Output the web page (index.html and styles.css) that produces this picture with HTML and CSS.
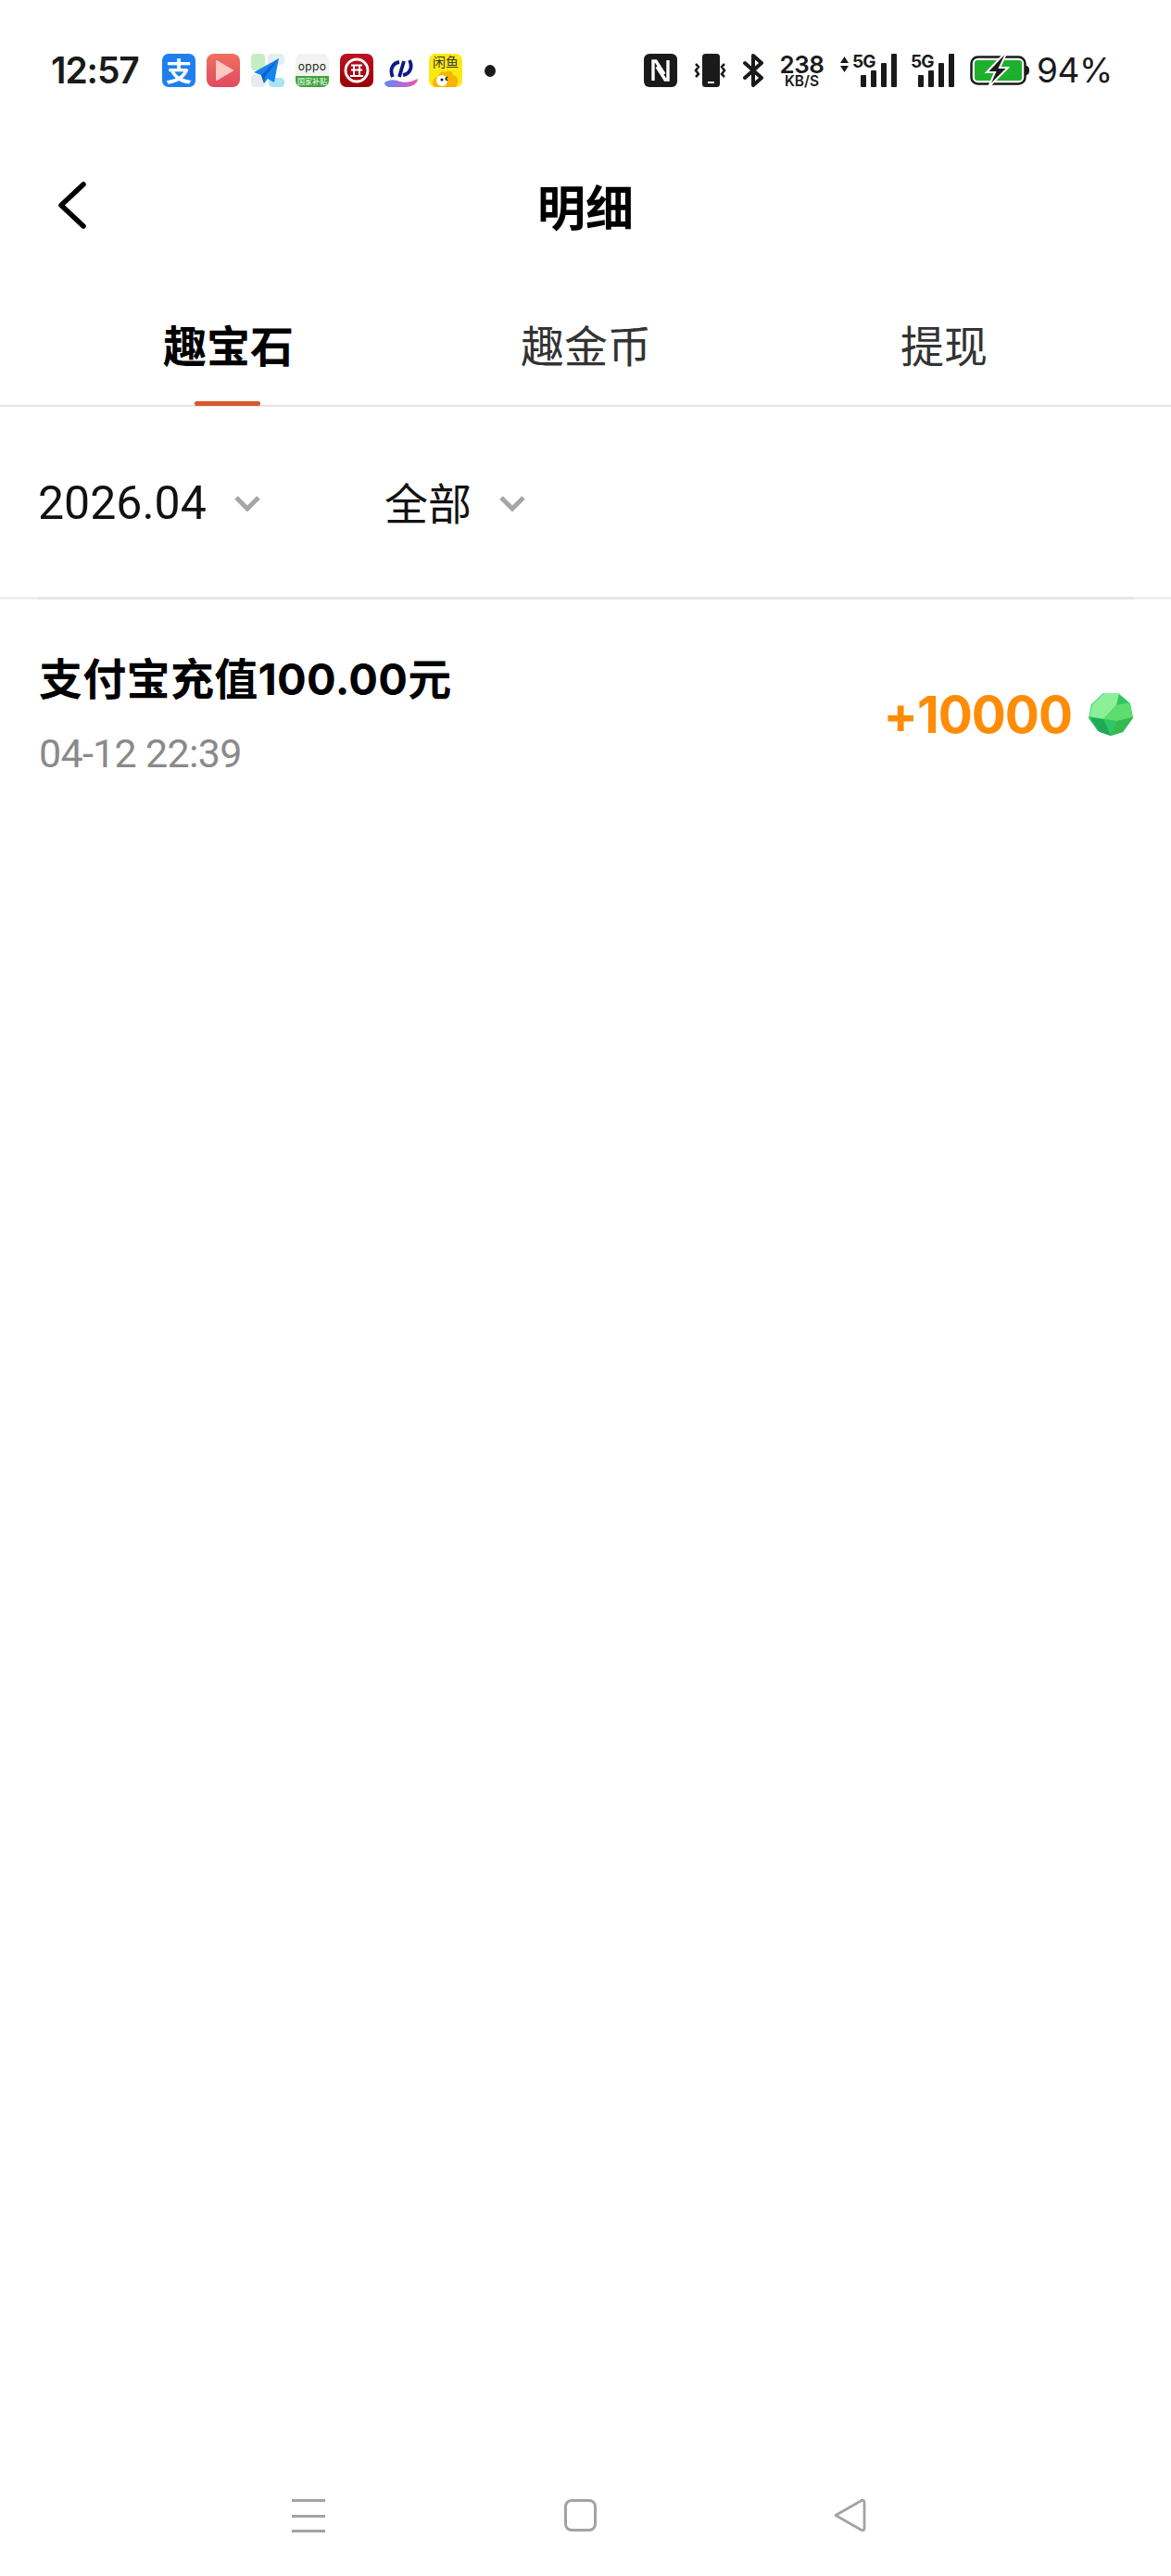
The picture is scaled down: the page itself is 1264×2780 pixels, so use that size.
FILE: index.html
```html
<!DOCTYPE html>
<html lang="zh">
<head>
<meta charset="utf-8">
<title>明细</title>
<link rel="stylesheet" href="styles.css">
</head>
<body>
<div class="page">
  <header class="status">
    <span class="time">12:57</span>
    <div class="apps">
      <div class="app alipay">支</div>
      <svg class="app" viewBox="0 0 36 36"><defs><linearGradient id="pl" x1="0" y1="0" x2="0" y2="1"><stop offset="0" stop-color="#f0705f"/><stop offset="1" stop-color="#e04a62"/></linearGradient></defs><rect width="36" height="36" rx="8" fill="url(#pl)"/><path d="M11 8l17 10-17 10z" fill="#fbc8c4" stroke="#fbc8c4" stroke-width="2" stroke-linejoin="round"/></svg>
      <svg class="app" viewBox="0 0 36 36"><rect x="0" y="0" width="15" height="18" rx="4" fill="#c5eec0"/><rect x="18" y="0" width="18" height="12" rx="4" fill="#e4eef2"/><rect x="0" y="22" width="15" height="14" rx="4" fill="#e4eef2"/><rect x="19" y="26" width="17" height="10" rx="4" fill="#a9e3f8"/><path d="M30 5L3 20l8 3 3 9 4-5 7 4z" fill="#1583ee"/><path d="M30 5L11 23l3 9 1-7z" fill="#0c62c4"/></svg>
      <div class="app oppo"><span class="oppo-name">oppo</span><span class="oppo-tag">国家补贴</span></div>
      <svg class="app" viewBox="0 0 36 36"><defs><linearGradient id="bk" x1="0" y1="0" x2="0" y2="1"><stop offset="0" stop-color="#bb1420"/><stop offset="1" stop-color="#980008"/></linearGradient></defs><rect width="36" height="36" rx="7" fill="url(#bk)"/><circle cx="18" cy="18" r="12" fill="none" stroke="#fff" stroke-width="2.800"/><path d="M12 12.500h12M11 24h14M15 12.500v5h6v-5M15 18v6M21 18v6M12 17.500h12" fill="none" stroke="#fff" stroke-width="2"/></svg>
      <svg class="app" viewBox="0 0 36 36"><defs><linearGradient id="wv" x1="0" y1="0" x2="1" y2="0"><stop offset="0" stop-color="#5a8df0"/><stop offset=".55" stop-color="#b06ad8"/><stop offset="1" stop-color="#f05aa0"/></linearGradient></defs><path d="M9 25C5 17 9 10 16 9M21 8l-5 17M27 7c4 8 0 15-7 16" fill="none" stroke="#0d1a80" stroke-width="3.800"/><path d="M0 31c6-4 11-3 17-1s12 0 19-3c0 5-6 9-14 9H6c-3 0-6-2-6-5z" fill="url(#wv)"/></svg>
      <div class="app duck"><span class="duck-name">闲鱼</span><svg class="duck-face" viewBox="0 0 36 20"><path d="M6 20c-5-6 1-12 4-11 1-5 4-7 8-5 4-3 8-1 8 3 6 1 7 8 3 13z" fill="#f7b500"/><circle cx="14" cy="13" r="6" fill="#fff"/><circle cx="14" cy="12" r="1.600" fill="#222"/><path d="M20 9l-2 2 2 2" fill="none" stroke="#222" stroke-width="1.500"/></svg></div>
    </div>
    <span class="dot"></span>
    <div class="sys">
      <svg class="ico-nfc" viewBox="0 0 36 36"><rect width="36" height="36" rx="6" fill="#1a1a1a"/><path d="M10 29V8h3l9 14M26 7v21h-3l-9-14" fill="none" stroke="#fff" stroke-width="3.400"/></svg>
      <svg class="ico-vib" viewBox="0 0 37 36"><rect x="10" width="19" height="36" rx="3.500" fill="#1a1a1a"/><rect x="16" y="30" width="7" height="2" fill="#fff"/><path d="M3 11l3 3-3 4 3 4-3 3M34 11l-3 3 3 4-3 4 3 3" fill="none" stroke="#1a1a1a" stroke-width="2.500"/></svg>
      <svg class="ico-bt" viewBox="0 0 23 36"><path d="M2 10l18 16-9 8V2l9 8L2 26" fill="none" stroke="#1a1a1a" stroke-width="4" stroke-linejoin="round" stroke-linecap="round"/></svg>
      <div class="speed"><span class="speed-num">238</span><span class="speed-unit">KB/S</span></div>
      <div class="signal">
        <svg class="updown" viewBox="0 0 9 17"><path d="M4.500 0L9 7H0zM4.500 17L0 10h9z" fill="#1a1a1a"/></svg>
        <span class="five">5G</span>
        <div class="bars"><i class="b1"></i><i class="b2"></i><i class="b3"></i><i class="b4"></i></div>
      </div>
      <div class="signal second">
        <span class="five">5G</span>
        <div class="bars"><i class="b1"></i><i class="b2"></i><i class="b3"></i><i class="b4"></i></div>
      </div>
      <svg class="ico-bat" viewBox="0 0 65 36"><rect x="1.500" y="3.500" width="58" height="29" rx="7" fill="#fff" stroke="#1a1a1a" stroke-width="2.500"/><rect x="5" y="7" width="51" height="22" rx="3" fill="#1eb02c"/><path d="M60 13c3 0 4 2 4 5s-1 5-4 5z" fill="#1a1a1a"/><path d="M37 0L18 20h9l-7 16 21-21h-9l7-15z" fill="#1a1a1a" stroke="#fff" stroke-width="2"/></svg>
      <span class="pct">94%</span>
    </div>
  </header>

  <div class="titlebar">
    <svg class="back" viewBox="0 0 30 51"><path d="M27 3L3 25.500 27 48" fill="none" stroke="#000" stroke-width="5.500" stroke-linecap="round" stroke-linejoin="round"/></svg>
    <h1 class="title">明细</h1>
  </div>

  <nav class="tabs">
    <div class="tab active">趣宝石<span class="mark"></span></div>
    <div class="tab">趣金币</div>
    <div class="tab">提现</div>
  </nav>

  <div class="filters">
    <div class="filter month"><span>2026.04</span><svg class="caret" viewBox="0 0 30 18"><path d="M3 3l12 12L27 3" fill="none" stroke="#a6a6a6" stroke-width="5"/></svg></div>
    <div class="filter"><span class="filter-cjk">全部</span><svg class="caret" viewBox="0 0 30 18"><path d="M3 3l12 12L27 3" fill="none" stroke="#a6a6a6" stroke-width="5"/></svg></div>
  </div>

  <div class="record-head"></div>
  <div class="record">
    <div class="record-info">
      <div class="record-name">支付宝充值100.00元</div>
      <div class="record-date">04-12 22:39</div>
    </div>
    <div class="record-amount">+10000
      <svg class="gem" viewBox="0 0 48 48"><path d="M16 1h16l13 11 3 16-11 15-13 4-14-5L0 28 3 13z" fill="#2fc765"/><path d="M17 1L4 13 1 26l15 3 14-15 3-13z" fill="#8cf09a"/><path d="M30 14l14-3 4 16-17 4-15-2z" fill="#5fdc70"/><path d="M31 31l17-4-11 16-13 4z" fill="#36b94f"/><path d="M2 28l14 1 8 18-12-4z" fill="#20a956"/></svg>
    </div>
  </div>

  <footer class="navbar">
    <div class="nav-menu"><i></i><i></i><i></i></div>
    <span class="nav-home"></span>
    <svg class="nav-back" viewBox="0 0 35 35"><path d="M2 17.500L30 1.500c1.500-.5 3 0 3 2v28c0 2-1.500 2.500-3 2z" fill="none" stroke="#a3a3a3" stroke-width="2.800" stroke-linejoin="round"/></svg>
  </footer>
</div>
</body>
</html>
```
FILE: styles.css
```css
* { box-sizing: border-box; }
html, body { margin: 0; padding: 0; background: #fff; }
body { font-family: "Inter", "Noto Sans CJK SC", sans-serif; color: #000; }
.page { width: 1264px; height: 2780px; display: flex; flex-direction: column; position: relative; overflow: hidden; background: #fff; }

/* status bar */
.status { margin-top: 58px; padding-left: 55px; display: flex; align-items: center; height: 36px; color: #1a1a1a; }
.time { width: 95px; font-size: 39px; font-weight: 600; letter-spacing: -1.1px; line-height: 36px; white-space: nowrap; }
.apps { display: flex; gap: 12px; margin-left: 25px; }
.app { width: 36px; height: 36px; flex: none; display: block; }
.alipay { border-radius: 7px; background: #1f7ff0; color: #fff; font-size: 28px; font-weight: 700; line-height: 36px; text-align: center; font-family: "Noto Sans CJK SC", sans-serif; }
.oppo { border-radius: 7px; background: linear-gradient(#f1f3f1 66%, #3da53c 66%); display: flex; flex-direction: column; align-items: center; justify-content: space-between; }
.oppo-name { font-size: 12px; line-height: 14px; margin-top: 7px; color: #222; letter-spacing: .3px; }
.oppo-tag { width: 100%; color: #fff; font-size: 8px; line-height: 12px; text-align: center; white-space: nowrap; font-family: "Noto Sans CJK SC", sans-serif; }
.duck { background: #ffe812; border-radius: 7px; display: flex; flex-direction: column; align-items: center; }
.duck-name { font-size: 14px; line-height: 16px; color: #333; white-space: nowrap; font-family: "Noto Sans CJK SC", sans-serif; }
.duck-face { width: 36px; height: 20px; display: block; }
.dot { width: 12px; height: 13px; border-radius: 50%; background: #1a1a1a; margin-left: 24px; flex: none; }
.sys { margin-left: 160px; display: flex; align-items: center; height: 36px; }
.ico-nfc { width: 36px; height: 36px; flex: none; }
.ico-vib { width: 37px; height: 36px; margin-left: 17px; flex: none; }
.ico-bt { width: 23px; height: 36px; margin-left: 17px; flex: none; }
.speed { width: 47px; margin-left: 17px; display: flex; flex-direction: column; align-items: center; flex: none; color: #1a1a1a; }
.speed-num { font-size: 26px; font-weight: 600; line-height: 23px; letter-spacing: -.4px; }
.speed-unit { font-size: 15.500px; font-weight: 600; line-height: 14px; white-space: nowrap; }
.signal { position: relative; display: flex; height: 36px; margin-left: 18px; width: 60px; flex: none; }
.updown { width: 9px; height: 17px; margin-top: 3px; flex: none; }
.five { position: absolute; left: 13px; top: -2px; font-size: 19px; font-weight: 700; line-height: 22px; letter-spacing: -1px; }
.bars { position: absolute; left: 22px; bottom: 0; display: flex; align-items: flex-end; gap: 5px; }
.bars i { display: block; width: 6px; border-radius: 1px; background: #1a1a1a; }
.b1 { height: 13px; } .b2 { height: 18px; } .b3 { height: 26px; } .b4 { height: 36px; }
.signal.second { margin-left: 16px; width: 46px; }
.second .five { left: 0; }
.second .bars { left: 8px; }
.ico-bat { width: 65px; height: 36px; margin-left: 18px; flex: none; }
.pct { margin-left: 7px; font-size: 37px; font-weight: 400; line-height: 36px; letter-spacing: -.4px; white-space: nowrap; }

/* title */
.titlebar { margin-top: 102px; height: 51px; display: flex; align-items: center; justify-content: center; position: relative; }
.back { position: absolute; left: 63px; top: 0; width: 30px; height: 51px; }
.title { margin: 0; font-size: 52px; line-height: 51px; font-weight: 700; font-family: "Noto Sans CJK SC", sans-serif; }

/* tabs */
.tabs { margin-top: 91px; padding-top: 3px; padding-left: 139px; height: 101px; display: flex; border-bottom: 2px solid #e3e3e3; font-family: "Noto Sans CJK SC", sans-serif; }
.tab { position: relative; font-size: 47px; line-height: 60px; color: #333; flex: none; white-space: nowrap; }
.tab:nth-child(1) { margin-left: 37px; }
.tab:nth-child(2) { margin-left: 245px; }
.tab:nth-child(3) { margin-left: 269px; }
.tab.active { font-weight: 700; color: #000; }
.mark { position: absolute; left: 34px; top: 92px; width: 71px; height: 5px; border-radius: 2px; background: #d9592a; }

/* filters */
.filters { margin-top: 74px; padding-left: 41px; height: 60px; display: flex; align-items: center; }
.filter { display: flex; align-items: center; font-size: 47px; line-height: 60px; color: #111; font-family: "Noto Sans CJK SC", sans-serif; white-space: nowrap; }
.filter.month { width: 374px; font-family: "Roboto", sans-serif; font-size: 50px; }
.filter-cjk { margin-top: -5px; }
.caret { width: 30px; height: 18px; margin-left: 29px; flex: none; }

/* record */
.record-head { margin-top: 71px; height: 3px; background: #e6e6e6; margin-left: 41px; margin-right: 41px; box-shadow: -41px 0 0 #eee, 41px 0 0 #eee; }
.record { margin-top: 56px; padding: 0 41px 0 42px; display: flex; align-items: center; justify-content: space-between; }
.record-name { font-size: 47px; letter-spacing: .3px; line-height: 60px; font-weight: 700; color: #000; white-space: nowrap; }
.record-date { margin-top: 25px; font-family: "Roboto", sans-serif; font-size: 43px; letter-spacing: -.7px; line-height: 50px; color: #8a8a8a; white-space: nowrap; }
.record-amount { display: flex; align-items: center; font-size: 55px; letter-spacing: -1px; font-weight: 700; line-height: 60px; color: #ff8c06; gap: 18px; white-space: nowrap; }
.gem { width: 48px; height: 48px; flex: none; }

/* nav */
.navbar { position: absolute; left: 0; right: 0; top: 2697px; height: 36px; display: block; }
.nav-menu { position: absolute; left: 315px; top: 0; width: 36px; height: 36px; display: flex; flex-direction: column; justify-content: space-between; }
.nav-menu i { display: block; height: 3px; background: #a3a3a3; }
.nav-home { position: absolute; left: 609px; top: 0; width: 35px; height: 35px; border: 3px solid #a3a3a3; border-radius: 8px; }
.nav-back { position: absolute; left: 900px; top: 0; width: 35px; height: 35px; }
```
